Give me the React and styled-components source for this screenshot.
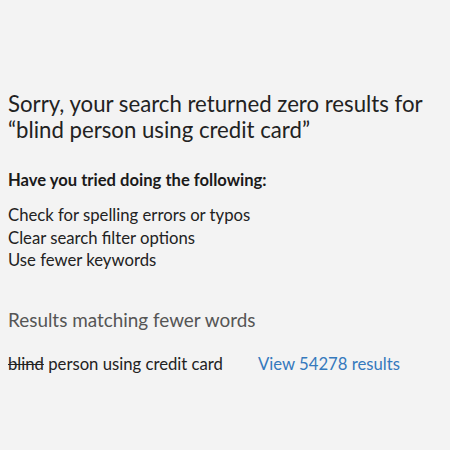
import React from "react";
import styled, { createGlobalStyle } from "styled-components";

const Global = createGlobalStyle`
  html, body { margin: 0; padding: 0; background: #f3f3f3; }
  body { font-family: Lato, "Open Sans", sans-serif; color: #222; }
`;

const Page = styled.main`
  width: 450px;
  height: 450px;
  box-sizing: border-box;
  padding: 91px 8px 0 8px;
  display: flex;
  flex-direction: column;
`;

const Title = styled.h1`
  margin: 0;
  font-size: 22.2px;
  line-height: 26px;
  font-weight: 400;
  color: #222;
`;

const Prompt = styled.h2`
  margin: 27px 0 0 0;
  font-size: 16.6px;
  line-height: 20px;
  font-weight: 700;
  color: #1a1a1a;
`;

const Tips = styled.ul`
  list-style: none;
  margin: 14px 0 0 0;
  padding: 0;
  font-size: 16.7px;
  line-height: 22.5px;
  color: #222;
`;

const SubTitle = styled.h3`
  margin: 36px 0 0 0;
  font-size: 18.9px;
  line-height: 24px;
  font-weight: 400;
  color: #555;
`;

const MatchRow = styled.div`
  margin-top: 21px;
  display: flex;
  align-items: baseline;
  gap: 35px;
  font-size: 16.7px;
  line-height: 22px;
`;

const Query = styled.span`
  color: #222;
`;

const Struck = styled.s`
  text-decoration-thickness: 1px;
`;

const ViewLink = styled.a`
  color: #3579bd;
  text-decoration: none;
`;

export default function App() {
  return (
    <>
      <Global />
      <Page>
        <Title>
          Sorry, your search returned zero results for
          <br />
          “blind person using credit card”
        </Title>
        <Prompt>Have you tried doing the following:</Prompt>
        <Tips>
          <li>Check for spelling errors or typos</li>
          <li>Clear search filter options</li>
          <li>Use fewer keywords</li>
        </Tips>
        <SubTitle>Results matching fewer words</SubTitle>
        <MatchRow>
          <Query>
            <Struck>blind</Struck> person using credit card
          </Query>
          <ViewLink href="#">View 54278 results</ViewLink>
        </MatchRow>
      </Page>
    </>
  );
}
